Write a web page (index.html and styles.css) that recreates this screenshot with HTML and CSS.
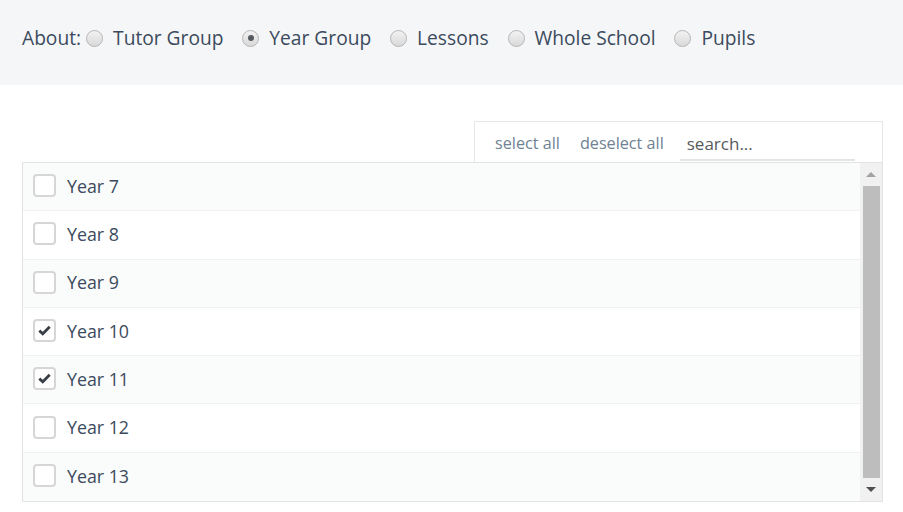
FILE: index.html
```html
<!DOCTYPE html>
<html>
<head>
<meta charset="utf-8">
<link rel="stylesheet" href="styles.css">
</head>
<body>
<div class="about-bar">
  <span class="about-label">About:</span>
  <label class="radio-opt"><span class="radio"></span><span>Tutor Group</span></label>
  <label class="radio-opt"><span class="radio checked"></span><span>Year Group</span></label>
  <label class="radio-opt"><span class="radio"></span><span>Lessons</span></label>
  <label class="radio-opt"><span class="radio"></span><span>Whole School</span></label>
  <label class="radio-opt"><span class="radio"></span><span>Pupils</span></label>
</div>
<div class="main">
  <div class="toolbar-wrap">
    <div class="toolbar">
      <a class="tool-link">select all</a>
      <a class="tool-link">deselect all</a>
      <input class="search" type="text" placeholder="search...">
    </div>
  </div>
  <div class="listbox">
    <div class="rows">
      <div class="row odd"><span class="cb"></span><span class="row-label">Year 7</span></div>
      <div class="row"><span class="cb"></span><span class="row-label">Year 8</span></div>
      <div class="row odd"><span class="cb"></span><span class="row-label">Year 9</span></div>
      <div class="row"><span class="cb checked"><svg viewBox="0 0 13 11" width="13" height="11"><path d="M1.3 5.6 L4.8 8.8 L11.7 1.8" fill="none" stroke="#3a3f47" stroke-width="2.8"/></svg></span><span class="row-label">Year 10</span></div>
      <div class="row odd"><span class="cb checked"><svg viewBox="0 0 13 11" width="13" height="11"><path d="M1.3 5.6 L4.8 8.8 L11.7 1.8" fill="none" stroke="#3a3f47" stroke-width="2.8"/></svg></span><span class="row-label">Year 11</span></div>
      <div class="row"><span class="cb"></span><span class="row-label">Year 12</span></div>
      <div class="row odd last"><span class="cb"></span><span class="row-label">Year 13</span></div>
    </div>
    <div class="scrollbar">
      <div class="arrow up"></div>
      <div class="thumb"></div>
      <div class="arrow down"></div>
    </div>
  </div>
</div>
</body>
</html>
```

FILE: styles.css
```css
* { box-sizing: border-box; }
body {
  margin: 0;
  background: #ffffff;
  font-family: "Open Sans", "Noto Sans", sans-serif;
  color: #3b4a5c;
}
.about-bar {
  height: 85px;
  background: #f5f6f8;
  display: flex;
  align-items: flex-start;
  padding: 25px 0 0 22px;
  font-size: 19.2px;
  line-height: 26px;
}
.about-label { margin-right: 5px; }
.radio-opt {
  display: flex;
  align-items: center;
  margin-right: 18.9px;
}
.radio {
  width: 17px;
  height: 17px;
  border-radius: 50%;
  border: 1px solid #b5b5b5;
  background: linear-gradient(#f2f2f2, #d9d9d9);
  margin-right: 10px;
  position: relative;
}
.radio.checked::after {
  content: "";
  position: absolute;
  left: 4.5px;
  top: 4.5px;
  width: 6px;
  height: 6px;
  border-radius: 50%;
  background: #555a60;
}
.main {
  padding: 36px 20px 0 22px;
}
.toolbar-wrap {
  display: flex;
  justify-content: flex-end;
}
.toolbar {
  width: 409px;
  height: 41px;
  border: 1px solid #e6e6e6;
  border-bottom: none;
  display: flex;
  align-items: center;
  padding: 1px 27px 0 20px;
}
.tool-link {
  font-size: 16.2px;
  color: #6f8293;
  white-space: nowrap;
  flex: none;
  margin-right: 20px;
}
.tool-link + .tool-link { margin-right: 16px; }
.search {
  flex: 1;
  width: 0;
  min-width: 0;
  border: none;
  border-bottom: 2px solid #e4e4e4;
  height: 33px;
  font-family: "Open Sans", "Noto Sans", sans-serif;
  font-size: 17px;
  padding: 0 7px 0;
  outline: none;
  background: transparent;
  color: #555;
  margin-top: 3px;
}
.search::placeholder { color: #555a5e; }
.listbox {
  width: 861px;
  height: 340px;
  border: 1px solid #e3e3e3;
  display: flex;
}
.rows { flex: 1; }
.row {
  height: 48.3px;
  display: flex;
  align-items: center;
  padding-left: 10px;
  padding-bottom: 2px;
  border-bottom: 1px solid #f0f1f1;
  background: #ffffff;
}
.row.odd { background: #fafbfb; }
.row.last { border-bottom: none; }
.cb {
  width: 23px;
  height: 23px;
  border: 2px solid #d6d6d6;
  border-radius: 4px;
  background: #fff;
  margin-right: 11px;
  display: flex;
  align-items: center;
  justify-content: center;
}
.row-label {
  font-size: 17.8px;
  color: #3b4a5c;
}
.scrollbar {
  width: 22px;
  background: #f1f1f1;
  display: flex;
  flex-direction: column;
  align-items: center;
  padding: 0 2px;
}
.arrow {
  height: 23px;
  width: 100%;
  position: relative;
}
.arrow::after {
  content: "";
  position: absolute;
  left: 4px;
  border-left: 5px solid transparent;
  border-right: 5px solid transparent;
}
.arrow.up::after {
  top: 9px;
  border-bottom: 5px solid #a3a3a3;
}
.arrow.down::after {
  top: 9px;
  border-top: 5px solid #505050;
}
.thumb {
  flex: 1;
  width: 17px;
  background: #bdbdbd;
}
```
